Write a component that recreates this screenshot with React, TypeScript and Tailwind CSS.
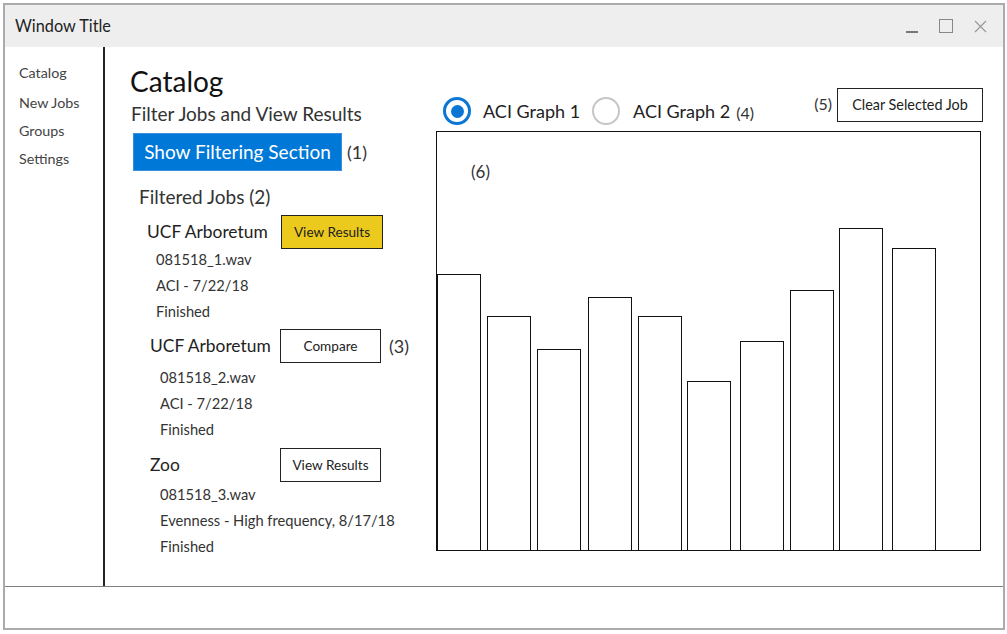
const NAV = ['Catalog', 'New Jobs', 'Groups', 'Settings']

const BARS = [
  { x: 0, top: 143 },
  { x: 50, top: 185 },
  { x: 100, top: 218 },
  { x: 151, top: 166 },
  { x: 201, top: 185 },
  { x: 250, top: 250 },
  { x: 303, top: 210 },
  { x: 353, top: 159 },
  { x: 402, top: 97 },
  { x: 455, top: 117 },
]

function Radio({ checked }: { checked?: boolean }) {
  return checked ? (
    <span className="flex h-[28px] w-[28px] shrink-0 items-center justify-center rounded-full border-[3px] border-[#0b76d4] bg-white">
      <span className="h-[13px] w-[13px] rounded-full bg-[#0b76d4]" />
    </span>
  ) : (
    <span className="block h-[28px] w-[28px] shrink-0 rounded-full border-2 border-[#c6c6c6] bg-white" />
  )
}

function JobDetails({ lines, indent }: { lines: string[]; indent: string }) {
  return (
    <div className={indent}>
      {lines.map((l) => (
        <p key={l} className="m-0 text-[14.7px] leading-[26px] text-[#333]">
          {l}
        </p>
      ))}
    </div>
  )
}

export default function App() {
  return (
    <div
      className="h-[634px] w-[1007px] bg-white pl-[3px] pt-[3px] text-[#222]"
      style={{ fontFamily: 'Lato, "Noto Sans", sans-serif' }}
    >
      <div className="flex h-[627px] w-[1002px] flex-col border-2 border-[#ababab]">
        {/* title bar */}
        <div className="flex h-[42px] shrink-0 items-center bg-[#eeeeee] pl-[10px] pr-[16px]">
          <span className="text-[16.3px] text-[#222]">Window Title</span>
          <div className="ml-auto flex items-center text-[#888]">
            <span className="mt-[12px] h-[1.5px] w-[12px] bg-[#777]" />
            <span className="ml-[21px] h-[14px] w-[14px] border-[1.5px] border-[#888]" />
            <svg className="ml-[21px]" width="13" height="13" viewBox="0 0 13 13">
              <path d="M1 1 L12 12 M12 1 L1 12" stroke="#999" strokeWidth="1.2" />
            </svg>
          </div>
        </div>

        {/* body */}
        <div className="flex flex-1">
          <nav className="w-[100px] shrink-0 border-r-2 border-[#222] pl-[14px] pt-[12px]">
            {NAV.map((n, i) => (
              <p
                key={n}
                className={`m-0 text-[14.3px] leading-[28px] text-[#444] ${i === 1 ? 'mt-[2px]' : ''}`}
              >
                {n}
              </p>
            ))}
          </nav>

          <main className="flex flex-1">
            {/* left column */}
            <section className="w-[331px] shrink-0 pl-[26px] pt-[17px]">
              <h1 className="m-0 -ml-[1px] text-[28px] font-normal leading-[34px] text-[#111]">Catalog</h1>
              <p className="m-0 mt-[5px] text-[19px] leading-[22px] text-[#333]">
                Filter Jobs and View Results
              </p>
              <div className="mt-[8px] flex items-center">
                <button className="ml-[2px] h-[38px] w-[209px] border border-[#3a8fe0] bg-[#0078d7] text-[19px] text-white">
                  Show Filtering Section
                </button>
                <span className="ml-[5px] text-[18px] text-[#333]">(1)</span>
              </div>

              <p className="m-0 mt-[15px] pl-[8px] text-[19px] leading-[22px] text-[#333]">
                Filtered Jobs (2)
              </p>

              {/* job 1 */}
              <div className="mt-[7px] flex items-center pl-[16px]">
                <span className="w-[134px] text-[17.4px] text-[#222]">UCF Arboretum</span>
                <button className="h-[34px] w-[102px] border border-[#222] bg-[#ebc91d] text-[13.6px] text-[#222]">
                  View Results
                </button>
              </div>
              <JobDetails indent="-mt-[3px] pl-[25px]" lines={['081518_1.wav', 'ACI - 7/22/18', 'Finished']} />

              {/* job 2 */}
              <div className="mt-[5px] flex items-center pl-[19px]">
                <span className="w-[130px] text-[17.4px] text-[#222]">UCF Arboretum</span>
                <button className="h-[34px] w-[101px] border border-[#222] bg-white text-[13.6px] text-[#222]">
                  Compare
                </button>
                <span className="ml-[8px] text-[18px] text-[#333]">(3)</span>
              </div>
              <JobDetails indent="mt-[1px] pl-[29px]" lines={['081518_2.wav', 'ACI - 7/22/18', 'Finished']} />

              {/* job 3 */}
              <div className="mt-[6px] flex items-center pl-[19px]">
                <span className="w-[130px] text-[17.4px] text-[#222]">Zoo</span>
                <button className="h-[34px] w-[101px] border border-[#222] bg-white text-[13.6px] text-[#222]">
                  View Results
                </button>
              </div>
              <JobDetails
                indent="-mt-[1px] pl-[29px]"
                lines={['081518_3.wav', 'Evenness - High frequency, 8/17/18', 'Finished']}
              />
            </section>

            {/* right column */}
            <section className="flex flex-1 flex-col pr-[22px] pt-[42px]">
              <div className="flex h-[42px] items-start">
                <div className="mt-[8px] flex items-center pl-[7px]">
                  <Radio checked />
                  <span className="ml-[12px] text-[18px] text-[#222]">ACI Graph 1</span>
                  <span className="ml-[12px] flex">
                    <Radio />
                  </span>
                  <span className="ml-[13px] text-[18px] text-[#222]">ACI Graph 2</span>
                  <span className="ml-[6px] mt-[4px] text-[16px] text-[#333]">(4)</span>
                </div>
                <div className="-mr-[2px] -mt-[1px] ml-auto flex items-start">
                  <span className="mr-[5px] text-[16px] leading-[32px] text-[#333]">(5)</span>
                  <button className="h-[34px] w-[146px] border border-[#222] bg-white text-[14.4px] text-[#222]">
                    Clear Selected Job
                  </button>
                </div>
              </div>

              <div className="h-[420px] w-[545px] border border-[#111]">
                <svg width="543" height="418" viewBox="0 0 543 418" shapeRendering="crispEdges">
                  <text x="34" y="46" fontSize="17" fill="#333" fontFamily="Lato, sans-serif">
                    (6)
                  </text>
                  {BARS.map((b) => (
                    <rect
                      key={b.x}
                      x={b.x + 0.5}
                      y={b.top - 0.5}
                      width={43}
                      height={419 - b.top}
                      fill="white"
                      stroke="#111"
                      strokeWidth={1}
                    />
                  ))}
                </svg>
              </div>
            </section>
          </main>
        </div>

        {/* footer */}
        <div className="h-[42px] shrink-0 border-t border-[#808080]" />
      </div>
    </div>
  )
}
